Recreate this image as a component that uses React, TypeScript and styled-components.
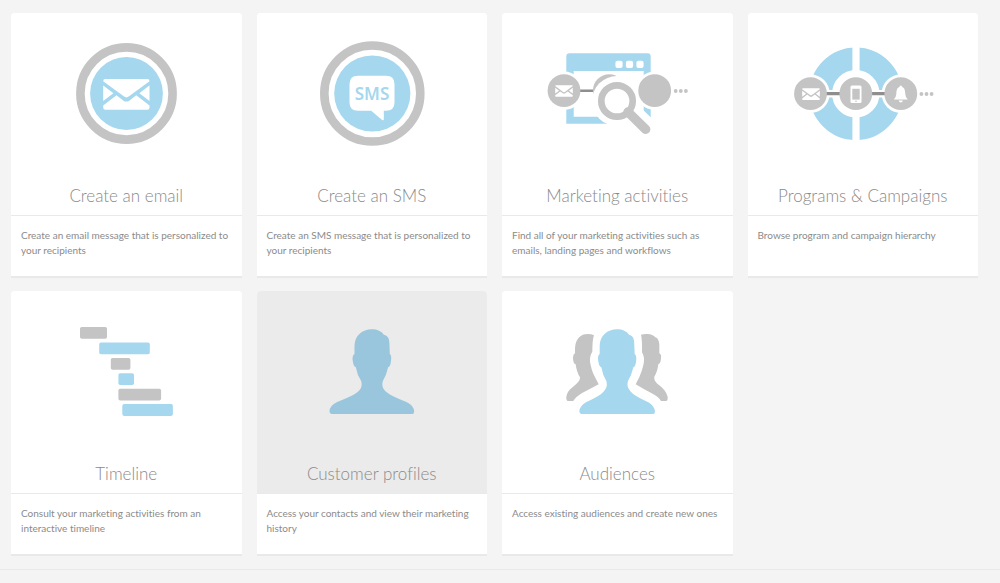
import React from 'react';
import styled, { createGlobalStyle } from 'styled-components';

const GREY = '#c4c4c4';
const BLUE = '#a5d7ee';
const DARK = '#8e8e8e';

const GlobalStyle = createGlobalStyle`
  * { box-sizing: border-box; }
  body {
    margin: 0;
    background: #f4f4f4;
    font-family: Lato, sans-serif;
    font-variant-ligatures: none;
  }
`;

const Page = styled.div`
  overflow: hidden;
`;

const CardGrid = styled.main`
  display: grid;
  grid-template-columns: repeat(4, minmax(0, 1fr));
  gap: 15px;
  padding: 13px 22px 15px 11px;
`;

const Card = styled.a`
  display: flex;
  flex-direction: column;
  min-height: 263px;
  background: #fff;
  border-radius: 4px 4px 0 0;
  box-shadow: 0 2px 0 #e9e9e9;
  color: #8b8b8b;
  text-decoration: none;
  overflow: hidden;
`;

const CardHead = styled.div<{ $active?: boolean }>`
  display: flex;
  flex-direction: column;
  align-items: center;
  padding-top: 22px;
  border-bottom: 1px solid #e9e9e9;
  background: ${(p) => (p.$active ? '#ebebeb' : '#fff')};
`;

const Art = styled.svg`
  display: block;
  width: 160px;
  height: 120px;
`;

const Title = styled.h2`
  margin: 0;
  padding: 28px 0 7px;
  font-size: 17px;
  line-height: 25px;
  font-weight: 300;
  color: #8a8a8a;
`;

const Description = styled.p`
  margin: 0;
  padding: 12px 10px;
  font-size: 10px;
  line-height: 15px;
`;

const Divider = styled.hr`
  margin: 0;
  border: 0;
  border-top: 1px solid #e9e9e9;
`;

function Envelope({ x, y, scale, color = '#fff' }: { x: number; y: number; scale: number; color?: string }) {
  return (
    <g transform={`translate(${x} ${y}) scale(${scale})`} fill={color}>
      <path d="M2 0H44.3Q46.3 0 46.3 2.2L25.5 17.6Q23.2 19.2 20.9 17.6L0 2.2Q0 0 2 0Z" />
      <path d="M0 6.6 10.2 14.3 0 22Z" />
      <path d="M46.3 6.6 36.1 14.3 46.3 22Z" />
      <path d="M13.3 16.3 20 21.4Q23.2 23.8 26.4 21.4L33 16.3 46.3 26.6V28.7Q46.3 30.7 44.3 30.7H2Q0 30.7 0 28.7V26.6Z" />
    </g>
  );
}

function Dots({ x, y }: { x: number; y: number }) {
  return (
    <g fill={GREY}>
      {[0, 5.1, 10.2].map((d) => (
        <circle key={d} cx={x + d} cy={y} r="1.9" />
      ))}
    </g>
  );
}

function EmailArt() {
  return (
    <Art viewBox="0 0 160 120" aria-hidden="true">
      <circle cx="80.5" cy="58.5" r="46.1" fill="none" stroke={GREY} strokeWidth="8.6" />
      <circle cx="80.5" cy="58.5" r="36.4" fill={BLUE} />
      <Envelope x={57.2} y={44} scale={1} />
    </Art>
  );
}

function SmsArt() {
  return (
    <Art viewBox="0 0 160 120" aria-hidden="true">
      <circle cx="80.3" cy="58.5" r="48" fill="none" stroke={GREY} strokeWidth="8.6" />
      <circle cx="80.3" cy="58.5" r="38.1" fill={BLUE} />
      <path
        fill="#fff"
        d="M66 40.7H94Q102.5 40.7 102.5 49V67.5Q102.5 75.7 94 75.7H91.8V84Q91.800 86 89.8 84.7L79.2 75.7H66Q57.5 75.7 57.5 67.5V49Q57.5 40.7 66 40.7Z"
      />
      <text x="80" y="65" textAnchor="middle" fill={BLUE} fontFamily="Noto Sans, sans-serif" fontSize="17" fontWeight="600">
        SMS
      </text>
    </Art>
  );
}

function ActivitiesArt() {
  return (
    <Art viewBox="0 0 160 120" aria-hidden="true">
      <path
        fill={BLUE}
        fillRule="evenodd"
        d="M32.5 18.3H110.5Q113.7 18.3 113.7 21.5V88.7H29.3V21.5Q29.3 18.3 32.5 18.3ZM36.7 36V81.7H106.7V36Z"
      />
      {[78.4, 88.9, 99.4].map((x) => (
        <rect key={x} x={x} y="25.7" width="7.2" height="7.2" rx="2" fill="#fff" />
      ))}
      <circle cx="27" cy="55.7" r="19.2" fill="#fff" />
      <circle cx="117.7" cy="55.7" r="19.2" fill="#fff" />
      <path d="M42 55.7H58" stroke={DARK} strokeWidth="2.6" />
      <circle cx="27" cy="55.7" r="16.4" fill={GREY} />
      <circle cx="72.3" cy="55.7" r="16.4" fill={GREY} />
      <circle cx="80" cy="66" r="25" fill="#fff" />
      <path d="M93 79 109 94.3" stroke="#fff" strokeWidth="24" />
      <circle cx="117.7" cy="55.7" r="16.4" fill={GREY} />
      <circle cx="80" cy="66" r="15.7" fill="#fff" stroke={GREY} strokeWidth="6.7" />
      <path d="M91 77 108.7 94.3" stroke={GREY} strokeWidth="9.4" strokeLinecap="round" />
      <Envelope x={18.2} y={50.2} scale={0.38} />
      <Dots x={138.7} y={56} />
    </Art>
  );
}

function ProgramsArt() {
  return (
    <Art viewBox="0 0 160 120" aria-hidden="true">
      <circle cx="72.8" cy="58.7" r="35" fill="none" stroke={BLUE} strokeWidth="22.6" />
      <path d="M73 10V108" stroke="#fff" strokeWidth="7.2" />
      <path d="M27 58.7H118" stroke="#fff" strokeWidth="7.4" />
      <circle cx="27.5" cy="58.7" r="19.2" fill="#fff" />
      <circle cx="117.8" cy="58.7" r="19.2" fill="#fff" />
      <path d="M42 58.7H104" stroke={DARK} strokeWidth="3.2" />
      {[27.5, 72.8, 117.8].map((x) => (
        <circle key={x} cx={x} cy="58.7" r="16.4" fill={GREY} />
      ))}
      <Envelope x={19.2} y={53.3} scale={0.38} />
      <rect x="67.5" y="50.6" width="11" height="17.4" rx="1.5" fill="#fff" />
      <rect x="69.3" y="53.8" width="7.4" height="10.8" fill={GREY} />
      <circle cx="73" cy="66.3" r=".8" fill={GREY} />
      <path
        fill="#fff"
        d="M117.8 50.5Q119.1 50.5 119.2 52C121.8 53 122.2 56 122.3 59Q122.5 62.5 124.8 64.6H110.8Q113.1 62.5 113.3 59C113.4 56 113.8 53 116.4 52Q116.5 50.5 117.8 50.5ZM115.7 65.4H119.9Q119.5 67.5 117.8 67.5 116.1 67.5 115.7 65.4Z"
      />
      <Dots x={138.4} y={59} />
    </Art>
  );
}

const timelineBars = [
  { x: 34, y: 14, w: 27, color: GREY },
  { x: 53.2, y: 29.4, w: 50.6, color: BLUE },
  { x: 64.8, y: 44.9, w: 19.6, color: GREY },
  { x: 72.4, y: 60.2, w: 15.6, color: BLUE },
  { x: 72.4, y: 75.8, w: 42.7, color: GREY },
  { x: 76.3, y: 91.1, w: 50.6, color: BLUE },
];

function TimelineArt() {
  return (
    <Art viewBox="0 0 160 120" aria-hidden="true">
      {timelineBars.map((b) => (
        <rect key={b.y} x={b.x} y={b.y} width={b.w} height="11.8" rx="1.8" fill={b.color} />
      ))}
    </Art>
  );
}

function ProfileArt() {
  return (
    <Art viewBox="0 0 160 120" aria-hidden="true">
      <g transform="translate(18.5 2) scale(.3333)" fill="#99c6dc">
        <path d="M57 289Q57 272 80 261C110 247 138 240 150 221Q156 212 152 198Q140 180 136 157Q128 155 126 132Q126 120 132 117L132 92C133 62 155 43 184 43C200 43 213 49 220 59C234 62 237 72 237 92L238 117Q243 120 242 132Q241 154 233 157Q228 180 217 198Q213 212 219 221C231 240 258 247 288 261Q311 272 311 290Q311 297 305 297L63 297Q57 297 57 289Z" />
      </g>
    </Art>
  );
}

function AudiencesArt() {
  return (
    <Art viewBox="0 0 160 120" aria-hidden="true">
      <g transform="translate(13 2) scale(.3333)">
        <g fill={GREY}>
          <path d="M49 245Q52 228 66 218C80 206 90 200 90 187Q80 172 77 148Q69 145 69 128Q69 118 75 115L75 100C77 70 92 57 113 57Q125 57 132 61Q127 75 127 110Q119 122 120 140Q125 168 133 182L146 208Q120 222 95 235Q75 248 70 258L54 258Q48 257 49 245Z" />
          <path d="M273 59Q283 56 292 57Q309 58 316 67Q327 70 328 90L328 115Q335 118 333 130Q332 146 325 148Q322 172 313 185Q311 196 322 206Q349 225 353 245Q354 258 348 258L333 258Q325 245 305 235Q280 222 257 208Q270 185 275 168Q283 145 282 130Q281 120 276 112Q277 75 273 59Z" />
        </g>
        <path
          fill={BLUE}
          d="M88 289Q89 273 108 262C134 248 156 241 167 221Q173 212 169 198Q158 180 154 157Q146 155 144 132Q144 120 149 117L149 92C150 62 172 43 201 43C217 43 230 49 237 59C250 62 253 72 253 92L254 117Q259 120 259 132Q258 154 250 157Q245 180 234 198Q230 212 236 221C247 241 269 248 295 262Q314 273 315 290Q315 297 309 297L94 297Q88 297 88 289Z"
        />
      </g>
    </Art>
  );
}

interface CardData {
  title: string;
  text: string;
  Picture: () => React.ReactElement;
  active?: boolean;
}

const cards: CardData[] = [
  { title: 'Create an email', text: 'Create an email message that is personalized to your recipients', Picture: EmailArt },
  { title: 'Create an SMS', text: 'Create an SMS message that is personalized to your recipients', Picture: SmsArt },
  { title: 'Marketing activities', text: 'Find all of your marketing activities such as emails, landing pages and workflows', Picture: ActivitiesArt },
  { title: 'Programs & Campaigns', text: 'Browse program and campaign hierarchy', Picture: ProgramsArt },
  { title: 'Timeline', text: 'Consult your marketing activities from an interactive timeline', Picture: TimelineArt },
  { title: 'Customer profiles', text: 'Access your contacts and view their marketing history', Picture: ProfileArt, active: true },
  { title: 'Audiences', text: 'Access existing audiences and create new ones', Picture: AudiencesArt },
];

export default function App() {
  return (
    <Page>
      <GlobalStyle />
      <CardGrid>
        {cards.map(({ title, text, Picture, active }) => (
          <Card key={title} href="#">
            <CardHead $active={active}>
              <Picture />
              <Title>{title}</Title>
            </CardHead>
            <Description>{text}</Description>
          </Card>
        ))}
      </CardGrid>
      <Divider />
    </Page>
  );
}
